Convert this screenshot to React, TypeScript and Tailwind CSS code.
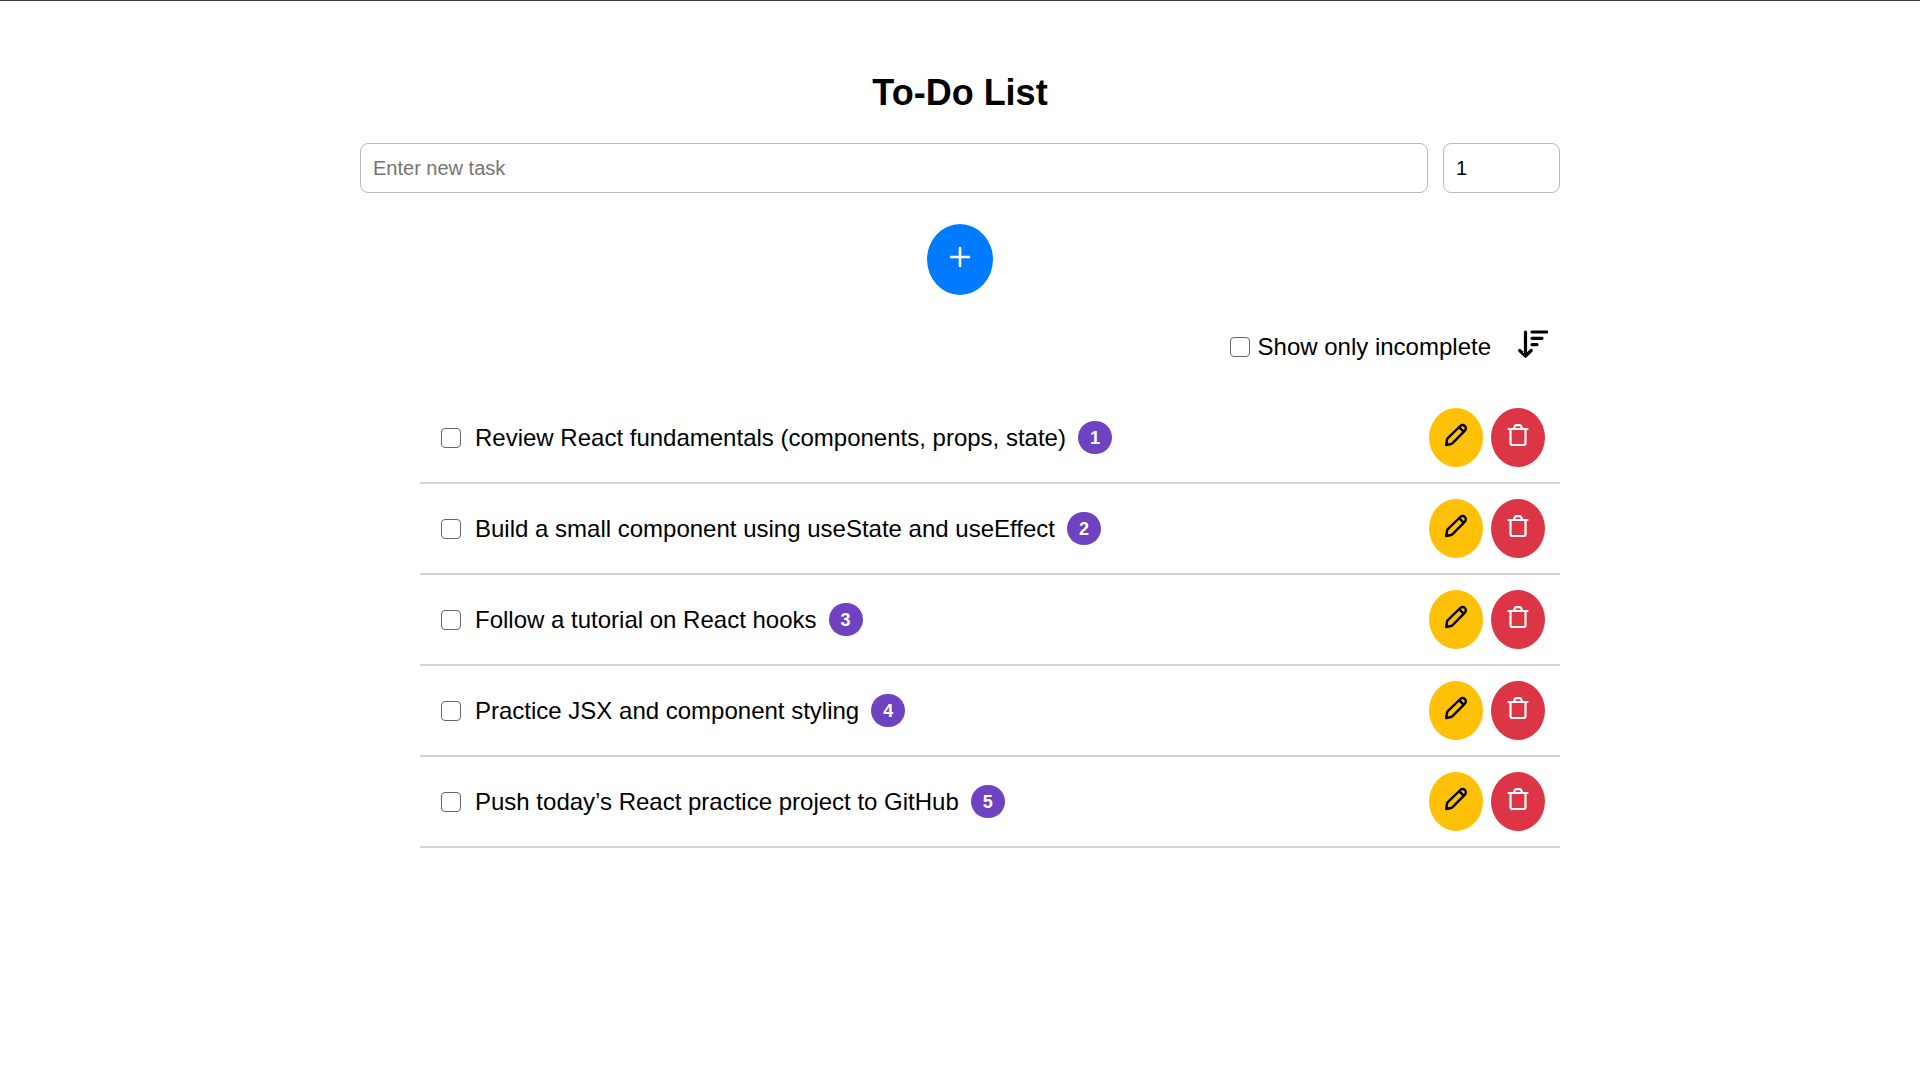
import { useState } from "react";

const initialTasks = [
  "Review React fundamentals (components, props, state)",
  "Build a small component using useState and useEffect",
  "Follow a tutorial on React hooks",
  "Practice JSX and component styling",
  "Push today’s React practice project to GitHub",
].map((text, i) => ({ id: i + 1, text, priority: i + 1, done: false }));

const checkbox =
  "size-5 shrink-0 appearance-none rounded border border-[#666] bg-white checked:bg-[#007bff]";

function PlusIcon() {
  return (
    <svg viewBox="0 0 24 24" className="size-6" fill="none" stroke="currentColor" strokeWidth="2.6" strokeLinecap="round" aria-hidden="true">
      <path d="M12 3v18M3 12h18" />
    </svg>
  );
}

function PencilIcon() {
  return (
    <svg viewBox="0 0 24 24" className="size-6" fill="none" stroke="currentColor" strokeWidth="2.4" strokeLinecap="round" strokeLinejoin="round" aria-hidden="true">
      <path d="M2.200 22l.8-5.200a3 3 0 0 1 .8-1.600L16.300 3a3.200 3.200 0 0 1 4.600 4.600L8.600 20.200a3 3 0 0 1-1.600.8z" />
      <path d="M15.600 4.600l3.800 3.800" />
    </svg>
  );
}

function TrashIcon() {
  return (
    <svg viewBox="0 0 24 24" className="size-6" fill="none" stroke="currentColor" strokeWidth="2.200" strokeLinecap="round" strokeLinejoin="round" aria-hidden="true">
      <path d="M2.500 6h19M4.500 6v14a2 2 0 0 0 2 2h11a2 2 0 0 0 2-2V6M7.800 5.800L8.600 3.600a2 2 0 0 1 1.900-1.400h3a2 2 0 0 1 1.900 1.400l.8 2.200" />
    </svg>
  );
}

function SortIcon() {
  return (
    <svg viewBox="0 0 32 32" className="size-8" fill="none" stroke="currentColor" strokeWidth="3.200" strokeLinecap="round" strokeLinejoin="round" aria-hidden="true">
      <path d="M9.500 4v24M3.800 22.500l5.700 5.700 5.700-5.700M16 4h15M16 10.300h10M16 16.600h5" />
    </svg>
  );
}

export default function App() {
  const [tasks, setTasks] = useState(initialTasks);
  const [text, setText] = useState("");
  const [priority, setPriority] = useState("1");
  const [onlyIncomplete, setOnlyIncomplete] = useState(false);

  const add = () => {
    if (!text.trim()) return;
    setTasks([...tasks, { id: Date.now(), text, priority: Number(priority), done: false }]);
    setText("");
  };
  const visible = tasks.filter((t) => !onlyIncomplete || !t.done);

  return (
    <div className="min-h-screen border-t border-[#3c3a3c] bg-white px-6 pt-[72px] font-['Liberation_Sans',Arial,sans-serif] text-2xl text-black">
      <main className="mx-auto flex max-w-[1200px] flex-col">
        <h1 className="text-center text-4xl font-bold">To-Do List</h1>

        <div className="mt-[30px] flex gap-[15px]">
          <input
            type="text"
            aria-label="New task"
            placeholder="Enter new task"
            value={text}
            onChange={(e) => setText(e.target.value)}
            className="h-[50px] min-w-0 flex-1 rounded-lg border border-[#bbb] px-3 text-xl placeholder:text-[#757575]"
          />
          <input
            type="number"
            aria-label="Priority"
            value={priority}
            onChange={(e) => setPriority(e.target.value)}
            className="h-[50px] w-[117px] rounded-lg border border-[#bbb] px-3 text-xl"
          />
        </div>

        <button
          type="button"
          aria-label="Add task"
          onClick={add}
          className="mt-[31px] flex h-[71px] w-[66px] items-center justify-center self-center rounded-[50%] bg-[#007bff] pb-1.5 text-white"
        >
          <PlusIcon />
        </button>

        <div className="mt-[30px] flex items-center justify-end gap-[25px] pr-3">
          <label className="flex items-center gap-2 pt-1.5">
            <input
              type="checkbox"
              checked={onlyIncomplete}
              onChange={(e) => setOnlyIncomplete(e.target.checked)}
              className={checkbox}
            />
            Show only incomplete
          </label>
          <button
            type="button"
            aria-label="Sort by priority"
            onClick={() => setTasks([...tasks].sort((a, b) => b.priority - a.priority))}
          >
            <SortIcon />
          </button>
        </div>

        <ul className="mt-[30px] ml-[60px]">
          {visible.map((task) => (
            <li key={task.id} className="flex items-center border-b-2 border-[#d3d3d3] py-[15px] pr-[15px] pl-[21px]">
              <label className="flex flex-1 items-center gap-[14px]">
                <input
                  type="checkbox"
                  checked={task.done}
                  onChange={() => setTasks(tasks.map((t) => (t.id === task.id ? { ...t, done: !t.done } : t)))}
                  className={checkbox}
                />
                <span>{task.text}</span>
                <span className="-ml-0.5 flex h-[33px] w-[34px] items-center justify-center rounded-full bg-[#6f42c1] text-lg font-bold text-white">
                  {task.priority}
                </span>
              </label>
              <div className="flex gap-2">
                <button
                  type="button"
                  aria-label={`Edit ${task.text}`}
                  className="flex h-[59px] w-[54px] items-center justify-center rounded-[50%] bg-[#ffc107] pb-1.5"
                >
                  <PencilIcon />
                </button>
                <button
                  type="button"
                  aria-label={`Delete ${task.text}`}
                  onClick={() => setTasks(tasks.filter((t) => t.id !== task.id))}
                  className="flex h-[59px] w-[54px] items-center justify-center rounded-[50%] bg-[#dc3545] pb-1.5 text-white"
                >
                  <TrashIcon />
                </button>
              </div>
            </li>
          ))}
        </ul>
      </main>
    </div>
  );
}
